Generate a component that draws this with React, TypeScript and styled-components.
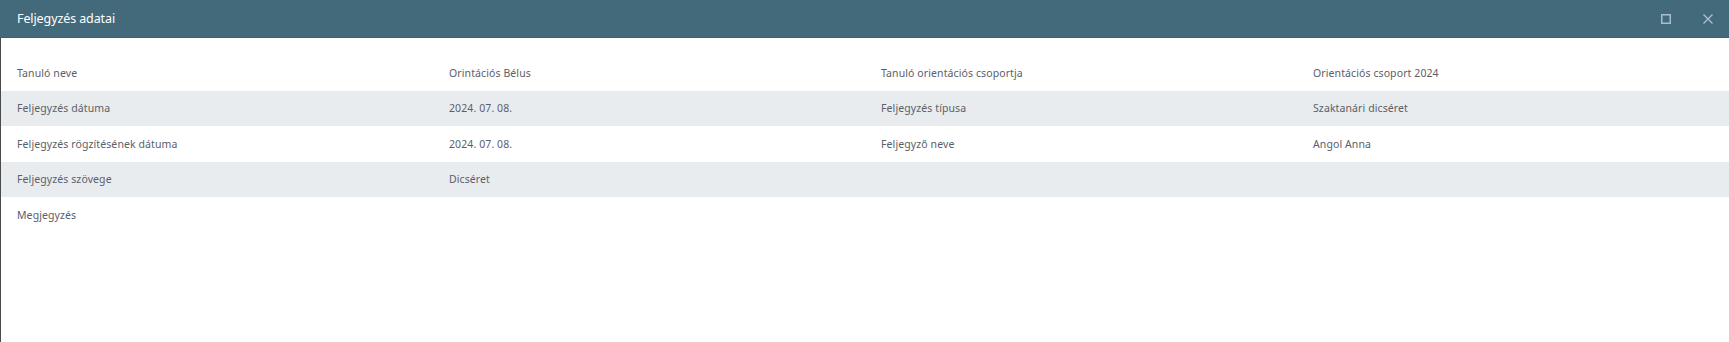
import styled, { createGlobalStyle } from "styled-components";

const GlobalStyle = createGlobalStyle`
  html, body {
    margin: 0;
    padding: 0;
    background: #ffffff;
  }
  body {
    font-family: "Noto Sans", "Open Sans", sans-serif;
  }
`;

const Dialog = styled.div`
  display: flex;
  flex-direction: column;
  width: 1729px;
  height: 342px;
  background: #ffffff;
  overflow: hidden;
`;

const Header = styled.div`
  display: flex;
  align-items: center;
  justify-content: space-between;
  height: 38px;
  padding: 0 14px 0 17px;
  box-sizing: border-box;
  background: #436a7b;
  border-bottom: 1px solid #3b6070;
`;

const Title = styled.h1`
  margin: 0;
  font-size: 12.5px;
  font-weight: 400;
  color: #ffffff;
  letter-spacing: -0.1px;
`;

const Actions = styled.div`
  display: flex;
  align-items: center;
  gap: 28px;
`;

const IconButton = styled.button`
  display: flex;
  align-items: center;
  justify-content: center;
  width: 14px;
  height: 14px;
  padding: 0;
  border: none;
  background: transparent;
  color: #a8bfca;
  cursor: pointer;
`;

const Body = styled.div`
  flex: 1;
  padding-top: 17px;
  border-left: 1px solid #4a4a4a;
`;

const Row = styled.div<{ $shaded?: boolean }>`
  display: grid;
  grid-template-columns: repeat(4, 1fr);
  height: 35.5px;
  align-items: center;
  background: ${(props) => (props.$shaded ? "#e9ecef" : "transparent")};
`;

const Cell = styled.div`
  padding-left: 16px;
  font-size: 10.5px;
  color: #5b6068;
  letter-spacing: 0.1px;
  white-space: nowrap;
`;

const rows = [
  ["Tanuló neve", "Orintációs Bélus", "Tanuló orientációs csoportja", "Orientációs csoport 2024"],
  ["Feljegyzés dátuma", "2024. 07. 08.", "Feljegyzés típusa", "Szaktanári dicséret"],
  ["Feljegyzés rögzítésének dátuma", "2024. 07. 08.", "Feljegyző neve", "Angol Anna"],
  ["Feljegyzés szövege", "Dicséret", "", ""],
  ["Megjegyzés", "", "", ""],
];

export default function App() {
  return (
    <>
      <GlobalStyle />
      <Dialog>
        <Header>
          <Title>Feljegyzés adatai</Title>
          <Actions>
            <IconButton aria-label="maximize">
              <svg width="10" height="10" viewBox="0 0 10 10">
                <rect x="0.75" y="0.75" width="8.5" height="8.5" fill="none" stroke="currentColor" strokeWidth="1.5" />
              </svg>
            </IconButton>
            <IconButton aria-label="close">
              <svg width="10" height="10" viewBox="0 0 10 10">
                <path d="M0.5 0.5 L9.5 9.5 M9.5 0.5 L0.5 9.5" stroke="currentColor" strokeWidth="1.4" />
              </svg>
            </IconButton>
          </Actions>
        </Header>
        <Body>
          {rows.map((row, i) => (
            <Row key={i} $shaded={i % 2 === 1}>
              {row.map((text, j) => (
                <Cell key={j}>{text}</Cell>
              ))}
            </Row>
          ))}
        </Body>
      </Dialog>
    </>
  );
}
